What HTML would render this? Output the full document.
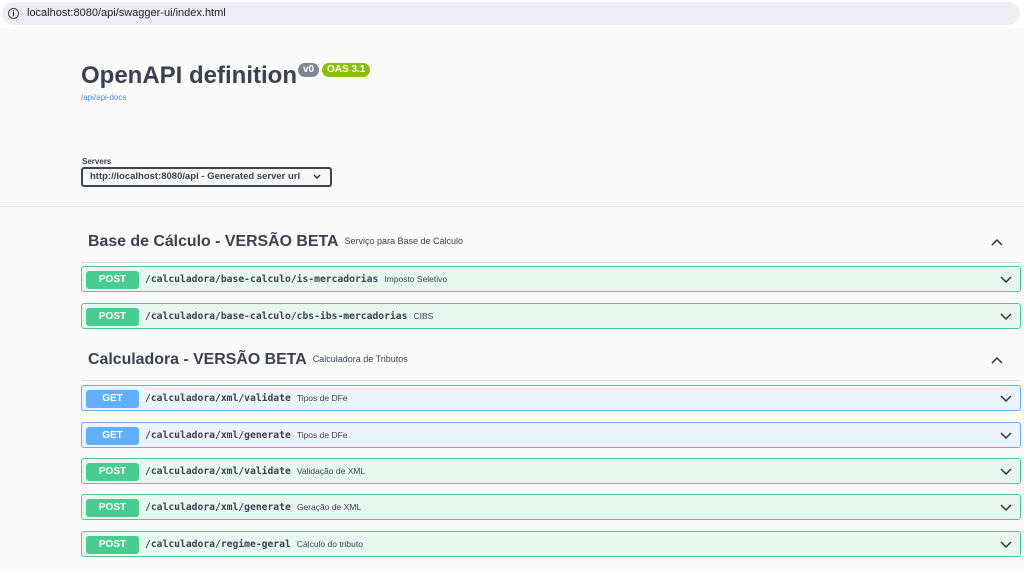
<!DOCTYPE html>
<html><head><meta charset="utf-8"><style>
*{box-sizing:border-box;margin:0;padding:0}
body{width:1024px;height:572px;overflow:hidden;background:#fafafa;font-family:"Liberation Sans",sans-serif;color:#3b4151;position:relative}
.bar{position:absolute;left:0;top:0;width:1024px;height:28px;background:#fff}
.url{position:absolute;left:2px;top:2px;width:1018px;height:23px;background:#efecf3;border-radius:12px;font-size:11px;color:#222;line-height:23px;padding-left:25px}
.url .i{position:absolute;left:6px;top:6px;width:11px;height:11px;border:1.3px solid #444;border-radius:50%;font-size:8px;line-height:9px;text-align:center;font-weight:bold}
.info{position:absolute;left:0;top:28px;width:1024px;height:179px;background:#fafafa;border-bottom:1px solid #e4e4e4}
h1{position:absolute;left:81px;top:62px;font-size:24px;font-weight:bold;color:#3b4151}
.v0{position:absolute;left:298px;top:63px;background:#7d8492;color:#fff;font-size:10px;font-weight:bold;padding:1px 5px;border-radius:8px;height:14px}
.oas{position:absolute;left:322px;top:63px;background:#89bf04;color:#fff;font-size:10px;font-weight:bold;padding:1px 5px;border-radius:8px;height:14px}
.link{position:absolute;left:81px;top:93px;font-size:8px;color:#4990e2}
.srv{position:absolute;left:82px;top:157px;font-size:8px;font-weight:bold}
.sel{position:absolute;left:81px;top:167px;width:251px;height:20px;border:2px solid #41444e;border-radius:3px;background:#f7f7f7;font-size:9.5px;font-weight:bold;line-height:16px;padding-left:7px}
.sel svg{position:absolute;right:9px;top:5px}
.tag{position:absolute;left:81px;width:940px;border-bottom:1px solid #d8dae0;padding-left:7px;white-space:nowrap}
.tag b{font-size:15.9px}
.tag span{font-size:9px;margin-left:6px;vertical-align:2px}
.tag svg{position:absolute;right:18px;top:5px}
.op{position:absolute;left:81px;width:940px;height:26px;border:1px solid #49cc90;background:#e8f6f0;border-radius:3px}
.op.g{border-color:#61affe;background:#ebf3fb}
.m{position:absolute;left:4px;top:4px;width:53px;height:18px;background:#49cc90;color:#fff;font-size:10px;font-weight:bold;text-align:center;line-height:18px;border-radius:3px}
.g .m{background:#61affe}
.p{position:absolute;left:63px;top:7px;font-family:"DejaVu Sans Mono","Liberation Mono",monospace;font-weight:bold;font-size:9.7px;color:#3b4151}
.d{font-family:"Liberation Sans",sans-serif;font-weight:normal;font-size:8.5px;margin-left:6px}
.op svg{position:absolute;right:8px;top:9px}
</style></head><body>
<div class="bar"><div class="url"><span class="i">i</span>localhost:8080/api/swagger-ui/index.html</div></div>
<div class="info"></div>
<h1>OpenAPI definition</h1>
<div class="v0">v0</div><div class="oas">OAS 3.1</div>
<div class="link">/api/api-docs</div>
<div class="srv">Servers</div>
<div class="sel">http://localhost:8080/api - Generated server url<svg width="8" height="6"><path d="M1 1l3 3 3-3" stroke="#333" stroke-width="1.5" fill="none"/></svg></div>

<div class="tag" style="top:233px;height:30px"><b>Base de Cálculo - VERSÃO BETA</b><span>Serviço para Base de Cálculo</span><svg width="12" height="8"><path d="M1 7l5-5 5 5" stroke="#333" stroke-width="1.5" fill="none"/></svg></div>
<div class="op" style="top:266px"><div class="m">POST</div><div class="p">/calculadora/base-calculo/is-mercadorias<span class="d">Imposto Seletivo</span></div><svg width="12" height="8"><path d="M1 1l5 5 5-5" stroke="#333" stroke-width="1.5" fill="none"/></svg></div>
<div class="op" style="top:303px"><div class="m">POST</div><div class="p">/calculadora/base-calculo/cbs-ibs-mercadorias<span class="d">CIBS</span></div><svg width="12" height="8"><path d="M1 1l5 5 5-5" stroke="#333" stroke-width="1.5" fill="none"/></svg></div>

<div class="tag" style="top:351px;height:30px"><b>Calculadora - VERSÃO BETA</b><span>Calculadora de Tributos</span><svg width="12" height="8"><path d="M1 7l5-5 5 5" stroke="#333" stroke-width="1.5" fill="none"/></svg></div>
<div class="op g" style="top:385px"><div class="m">GET</div><div class="p">/calculadora/xml/validate<span class="d">Tipos de DFe</span></div><svg width="12" height="8"><path d="M1 1l5 5 5-5" stroke="#333" stroke-width="1.5" fill="none"/></svg></div>
<div class="op g" style="top:422px"><div class="m">GET</div><div class="p">/calculadora/xml/generate<span class="d">Tipos de DFe</span></div><svg width="12" height="8"><path d="M1 1l5 5 5-5" stroke="#333" stroke-width="1.5" fill="none"/></svg></div>
<div class="op" style="top:458px"><div class="m">POST</div><div class="p">/calculadora/xml/validate<span class="d">Validação de XML</span></div><svg width="12" height="8"><path d="M1 1l5 5 5-5" stroke="#333" stroke-width="1.5" fill="none"/></svg></div>
<div class="op" style="top:494px"><div class="m">POST</div><div class="p">/calculadora/xml/generate<span class="d">Geração de XML</span></div><svg width="12" height="8"><path d="M1 1l5 5 5-5" stroke="#333" stroke-width="1.5" fill="none"/></svg></div>
<div class="op" style="top:531px"><div class="m">POST</div><div class="p">/calculadora/regime-geral<span class="d">Cálculo do tributo</span></div><svg width="12" height="8"><path d="M1 1l5 5 5-5" stroke="#333" stroke-width="1.5" fill="none"/></svg></div>
</body></html>
